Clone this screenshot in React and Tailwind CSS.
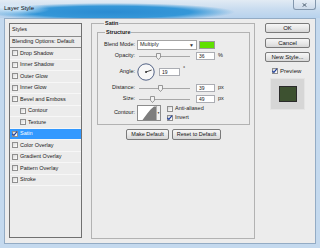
import React from "react";

const effects = [
  { name: "Drop Shadow" },
  { name: "Inner Shadow" },
  { name: "Outer Glow" },
  { name: "Inner Glow" },
  { name: "Bevel and Emboss" },
  { name: "Contour", sub: true },
  { name: "Texture", sub: true },
  { name: "Satin", on: true },
  { name: "Color Overlay" },
  { name: "Gradient Overlay" },
  { name: "Pattern Overlay" },
  { name: "Stroke" },
];

const Check = ({ on }) => (
  <span className="relative flex h-[6px] w-[6px] shrink-0 items-center justify-center border border-[#8f8f8f] bg-gradient-to-br from-[#d8d8d8] to-white">
    {on && (
      <svg width="6" height="6" viewBox="0 0 6 6" className="absolute overflow-visible">
        <path d="M0.3 2.8 L1.9 4.4 L5 0.6" stroke="#1f3f9a" strokeWidth="1.1" fill="none" />
      </svg>
    )}
  </span>
);

const Btn = ({ children, className = "" }) => (
  <div
    className={
      "flex items-center justify-center rounded-[2px] border border-[#7a7a7a] bg-gradient-to-b from-[#f6f6f6] via-[#e9e9e9] to-[#d7d7d7] text-[#111] " +
      className
    }
  >
    {children}
  </div>
);

const Field = ({ value }) => (
  <div className="flex h-[8px] w-[19px] items-center border border-[#abadb3] bg-white pl-[2px] text-[5px] leading-none">
    {value}
  </div>
);

const Slider = ({ pos }) => (
  <div className="relative ml-[2px] flex h-[8px] w-[55px] items-center">
    <div className="mx-[2px] h-px w-full bg-[#a8a8a8]" />
    <svg width="5" height="7" viewBox="0 0 5 7" className="absolute top-[1px]" style={{ left: pos }}>
      <path d="M0.5 0.5 H4.5 V4.3 L2.5 6.5 L0.5 4.3 Z" fill="#f2f2f2" stroke="#808080" strokeWidth="0.8" />
    </svg>
  </div>
);

const Row = ({ label, className = "", children }) => (
  <div className={"flex items-center " + className}>
    <span className="w-[37px] shrink-0 text-right">{label}</span>
    {children}
  </div>
);

export default function App() {
  return (
    <div className="flex h-[248px] w-[320px] flex-col overflow-hidden bg-[#c4d9ee] font-['Liberation_Sans',Arial,sans-serif] text-[5.5px] leading-none text-[#1a1a1a]">
      {/* title bar */}
      <div className="flex h-[18px] shrink-0 items-start bg-[radial-gradient(ellipse_34px_6px_at_16px_9px,rgba(225,240,252,0.95)_0%,rgba(225,240,252,0)_100%),radial-gradient(ellipse_125px_9px_at_110px_12px,#2a8bd2_0%,#3597d8_65%,rgba(60,150,215,0)_100%),linear-gradient(to_bottom,#e2ebf4,#c9dcef_50%,#b7d2ed)]">
        <span className="mt-[5px] pl-[4px] text-[6px] text-[#111]">Layer Style</span>
        <div className="mr-[4px] ml-auto flex h-[10px] w-[23px] items-center justify-center rounded-b-[3px] border border-t-0 border-[#8397ad] bg-gradient-to-b from-[#e7eef6] to-[#ccdaea]">
          <svg width="5" height="4" viewBox="0 0 5 4">
            <path d="M0.5 0.3 L4.5 3.7 M4.5 0.3 L0.5 3.7" stroke="#4a5a6c" strokeWidth="0.9" />
          </svg>
        </div>
      </div>

      {/* body */}
      <div className="mx-[4px] flex h-[226px] shrink-0 items-start border border-[#93abc4] bg-[#ececec]">
        {/* styles list */}
        <div className="mt-[4px] ml-[4px] flex h-[215px] w-[73px] shrink-0 flex-col border border-[#707070]">
          <div className="flex h-[13px] items-center border-b border-[#8a8a8a] pl-[2px]">Styles</div>
          <div className="flex h-[11px] items-center border-b border-[#8a8a8a] pl-[2px]">Blending Options: Default</div>
          {effects.map((e) => (
            <div
              key={e.name}
              className={
                "flex h-[11.5px] items-center gap-[2px] border-b border-[#f7f7f7] " +
                (e.sub ? "pl-[10px] " : "pl-[2px] ") +
                (e.on ? "bg-[#3399ff] text-white" : "")
              }
            >
              <Check on={e.on} />
              <span>{e.name}</span>
            </div>
          ))}
        </div>

        {/* satin group */}
        <fieldset className="mt-[1px] ml-[9px] h-[219px] w-[164px] shrink-0 border border-[#b2b2b2] pl-[5px]">
          <legend className="ml-[7px] px-[1px] font-bold leading-[7px]">Satin</legend>
          <fieldset className="mt-[2px] h-[96px] w-[153px] border border-[#b2b2b2]">
            <legend className="ml-[7px] px-[1px] font-bold leading-[7px]">Structure</legend>

            <Row label="Blend Mode:" className="mt-[4px] h-[10px]">
              <div className="ml-[2px] flex h-[10px] w-[60px] items-center justify-between border border-[#a4a4a4] bg-white px-[2px]">
                <span>Multiply</span>
                <span className="text-[5px] text-[#333]">▼</span>
              </div>
              <div className="ml-[2px] h-[8px] w-[16px] border border-[#9a9a9a] bg-[#5fe000]" />
            </Row>

            <Row label="Opacity:" className="mt-[2px] h-[8px]">
              <Slider pos={19} />
              <div className="ml-[4px]">
                <Field value="36" />
              </div>
              <span className="ml-[3px]">%</span>
            </Row>

            <Row label="Angle:" className="mt-[3px] h-[18px]">
              <svg width="18" height="18" viewBox="0 0 18 18" className="ml-[2px]">
                <circle cx="9" cy="9" r="8.2" fill="#f7f7f7" stroke="#3f5178" strokeWidth="0.9" />
                <line x1="9" y1="9" x2="14.7" y2="7" stroke="#222" strokeWidth="0.8" />
                <circle cx="9" cy="9" r="0.9" fill="#222" />
              </svg>
              <div className="ml-[4px] flex h-[8px] w-[21px] items-center border border-[#abadb3] bg-white pl-[2px] text-[5px]">
                19
              </div>
              <span className="ml-[3px] self-start pt-[3px]">°</span>
            </Row>

            <Row label="Distance:" className="mt-[3px] h-[8px]">
              <Slider pos={21} />
              <div className="ml-[4px]">
                <Field value="39" />
              </div>
              <span className="ml-[3px]">px</span>
            </Row>

            <Row label="Size:" className="mt-[3px] h-[8px]">
              <Slider pos={13} />
              <div className="ml-[4px]">
                <Field value="49" />
              </div>
              <span className="ml-[3px]">px</span>
            </Row>

            <Row label="Contour:" className="mt-[2px] h-[16px]">
              <div className="ml-[2px] flex h-[16px] items-stretch border border-[#8c8c8c] bg-white">
                <svg width="18" height="14" viewBox="0 0 18 14">
                  <path d="M4.5 14 C8 9.5 11 4 16 0.5 L18 0.5 L18 14 Z" fill="#7d7d7d" />
                </svg>
                <div className="flex w-[4px] items-center justify-center border-l border-[#b0b0b0] bg-[#f0f0f0] text-[3px]">
                  ▼
                </div>
              </div>
              <div className="ml-[6px] flex flex-col gap-[3px]">
                <div className="flex items-center gap-[2px]">
                  <Check />
                  <span>Anti-aliased</span>
                </div>
                <div className="flex items-center gap-[2px]">
                  <Check on />
                  <span>Invert</span>
                </div>
              </div>
            </Row>
          </fieldset>

          <div className="mt-[4px] flex gap-[3px] pl-[29px]">
            <Btn className="h-[11px] w-[43px]">Make Default</Btn>
            <Btn className="h-[11px] w-[49px]">Reset to Default</Btn>
          </div>
        </fieldset>

        {/* right column */}
        <div className="mt-[4px] ml-[10px] flex w-[45px] shrink-0 flex-col text-[6px]">
          <Btn className="h-[10px] border-[#3c7fb1] from-[#eaf6fd] via-[#d9f0fc] to-[#bee6fd]">OK</Btn>
          <Btn className="mt-[5px] h-[10px]">Cancel</Btn>
          <Btn className="mt-[4px] h-[10px]">New Style...</Btn>
          <div className="mt-[5px] flex h-[7px] items-center gap-[2px] pl-[7px]">
            <Check on />
            <span>Preview</span>
          </div>
          <div className="mt-[4px] flex h-[32px] w-[35px] items-center justify-center self-center border border-[#e4e4e4] bg-[#d6d6d6]">
            <div className="h-[16px] w-[18px] border border-[#2b2b2b] bg-[#3d5130]" />
          </div>
        </div>
      </div>
    </div>
  );
}
